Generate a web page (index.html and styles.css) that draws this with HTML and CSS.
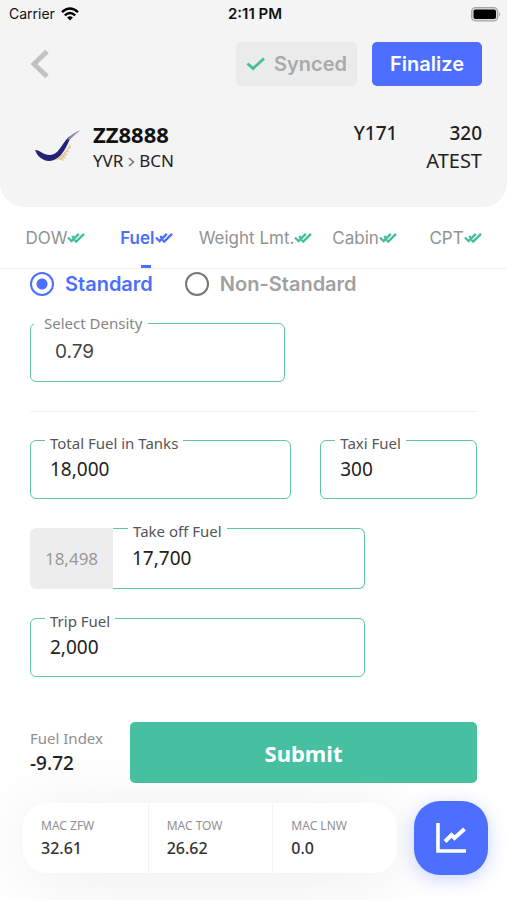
FILE: index.html
```html
<!DOCTYPE html>
<html lang="en">
<head>
<meta charset="utf-8">
<meta name="viewport" content="width=device-width, initial-scale=1">
<title>ZZ8888 Fuel</title>
<link rel="stylesheet" href="styles.css">
</head>
<body>
<svg class="defs" aria-hidden="true">
  <symbol id="checks" viewBox="0 0 18 12">
    <path d="M1 5.500 L4.600 9 L11.800 1.800 M5.200 4.200 L6.600 5.600 M7.600 8 L9.200 9.600 L17 1.800" fill="none" stroke="currentColor" stroke-width="2.400"/>
  </symbol>
</svg>
<header class="header">
  <div class="status">
    <span class="carrier">Carrier
      <svg width="18" height="14" viewBox="0 0 18 14" fill="none" stroke="#000" stroke-width="2.400"><path d="M1 5.200 Q9 -2.200 17 5.200"/><path d="M3.800 8.300 Q9 3.500 14.200 8.300"/><path d="M9 13.500 L6.100 10.400 Q9 8 11.900 10.400 Z" fill="#000" stroke="none"/></svg>
    </span>
    <time class="time">2:11 PM</time>
    <svg class="battery" width="30" height="15" viewBox="0 0 30 15"><rect x="0.700" y="0.700" width="26" height="13.200" rx="4" fill="#ddd" stroke="#a5a5a5" stroke-width="1.300"/><rect x="2.500" y="2.500" width="22.500" height="9.600" rx="2" fill="#000"/><path d="M28 5 Q30 7.300 28 9.600Z" fill="#a5a5a5"/></svg>
  </div>
  <div class="actions">
    <button class="back" type="button" aria-label="Back"><svg width="20" height="30" viewBox="0 0 20 30"><path d="M17 2.500 L4 15 L17 27.500" fill="none" stroke="#c2c2c2" stroke-width="5"/></svg></button>
    <button class="btn synced" type="button"><svg width="20" height="14" viewBox="0 0 20 14"><path d="M1.500 6.500 L7 11.500 L18 1.500" fill="none" stroke="#43bf9c" stroke-width="2.800"/></svg>Synced</button>
    <button class="btn finalize" type="button">Finalize</button>
  </div>
  <div class="flight">
    <svg class="logo" width="48" height="34" viewBox="0 0 48 34">
      <path d="M36 14 C32 21 28 26 20 30 L24 29.500 L31 31 L28 28 L33 28.500 L30 26 L34 25 L31.500 23 L35.500 21.500 L33 20 L37 18Z" fill="#e3cb9c"/>
      <path d="M1 20 C6 20 9 25 16 25 C26 25 29 9 38 5 C34 12 30 26 20 30 C11 33 4 28 1 20Z" fill="#23217a"/>
      <path d="M33 9.500 Q38 3 47 0 Q41 4 36 9.500Z" fill="#8c8ba8"/>
    </svg>
    <div class="ident">
      <h1 class="number">ZZ8888</h1>
      <p class="route">YVR <svg width="7" height="10" viewBox="0 0 7 10"><path d="M1 1 L5.500 5 L1 9" fill="none" stroke="#777" stroke-width="1.600"/></svg> BCN</p>
    </div>
    <div class="aircraft">
      <p class="config"><span>Y171</span><span>320</span></p>
      <p class="reg">ATEST</p>
    </div>
  </div>
</header>

<nav class="tabs">
  <a class="tab" href="#dow">DOW<svg><use href="#checks"/></svg></a>
  <a class="tab active" href="#fuel">Fuel<svg><use href="#checks"/></svg></a>
  <a class="tab" href="#weight">Weight Lmt.<svg><use href="#checks"/></svg></a>
  <a class="tab" href="#cabin">Cabin<svg><use href="#checks"/></svg></a>
  <a class="tab" href="#cpt">CPT<svg><use href="#checks"/></svg></a>
</nav>

<form class="form">
  <div class="radios">
    <label class="radio"><input type="radio" name="mode" checked><span>Standard</span></label>
    <label class="radio"><input type="radio" name="mode"><span>Non-Standard</span></label>
  </div>
  <div class="field density">
    <label for="density">Select Density</label>
    <select id="density"><option>0.79</option></select>
  </div>
  <hr class="rule">
  <div class="pair">
    <div class="field"><label for="total">Total Fuel in Tanks</label><input id="total" type="text" value="18,000"></div>
    <div class="field"><label for="taxi">Taxi Fuel</label><input id="taxi" type="text" value="300"></div>
  </div>
  <div class="takeoff">
    <output class="computed">18,498</output>
    <div class="field joined"><label for="takeoff">Take off Fuel</label><input id="takeoff" type="text" value="17,700"></div>
  </div>
  <div class="field trip"><label for="trip">Trip Fuel</label><input id="trip" type="text" value="2,000"></div>
  <div class="submit-row">
    <div class="index"><span class="index-name">Fuel Index</span><span class="index-value">-9.72</span></div>
    <button class="submit" type="submit">Submit</button>
  </div>
</form>

<footer class="footer">
  <dl class="mac">
    <div><dt>MAC ZFW</dt><dd>32.61</dd></div>
    <div><dt>MAC TOW</dt><dd>26.62</dd></div>
    <div><dt>MAC LNW</dt><dd>0.0</dd></div>
  </dl>
  <button class="chart" type="button" aria-label="Chart"><svg width="32" height="32" viewBox="0 0 32 32" fill="none" stroke="#fff"><path d="M3 1 V29 H31" stroke-width="3.600"/><path d="M10 19.500 L16.500 13 L19.500 16 L29.500 7" stroke-width="4"/></svg></button>
</footer>
</body>
</html>
```
FILE: styles.css
```css
* { box-sizing: border-box; }

body {
  margin: 0;
  min-height: 100vh;
  background: #fff;
  color: #222;
  font-family: "Noto Sans", sans-serif;
  display: flex;
  flex-direction: column;
}

h1, p, dl, dd { margin: 0; }

button, input, select { font: inherit; }

button { border: 0; padding: 0; cursor: pointer; }

.defs { position: absolute; width: 0; height: 0; }

/* Header */
.header {
  background: #f4f4f4;
  border-radius: 0 0 24px 24px;
  padding-bottom: 33px;
}

.status {
  display: grid;
  grid-template-columns: 1fr auto 1fr;
  align-items: center;
  height: 28px;
  padding: 0 6px 0 9px;
  color: #111;
  font: 14px/20px Inter, sans-serif;
}

.carrier { display: flex; align-items: center; gap: 6px; }
.time { font-size: 15px; font-weight: 600; }
.battery { justify-self: end; }

.actions {
  display: flex;
  align-items: center;
  gap: 15px;
  padding: 14px 25px 0 30px;
}

.back { display: flex; margin-right: auto; background: none; }

.btn {
  display: flex;
  align-items: center;
  justify-content: center;
  height: 44px;
  border-radius: 5px;
  font: 600 20px/24px Inter, sans-serif;
}

.synced { gap: 8px; padding: 0 10px; background: #ebebeb; color: #aaa; }
.finalize { width: 110px; background: #4c6fff; color: #fff; }

.flight {
  display: flex;
  align-items: center;
  gap: 11px;
  padding: 34px 25px 0 34px;
}

.ident { flex: 1; }
.number { color: #111; font-size: 22px; line-height: 28px; font-weight: 700; }
.route { font-size: 17px; line-height: 26px; }
.aircraft { color: #222; text-align: right; font-size: 19px; line-height: 27px; }
.config { display: flex; gap: 52px; justify-content: flex-end; font-weight: 500; }
.reg { font-size: 20px; }

/* Tabs */
.tabs {
  display: grid;
  grid-template-columns: 5fr 5fr 7fr 5fr 5fr;
  height: 62px;
  padding: 0 6px 0 10px;
  border-bottom: 1px solid #efefef;
}

.tab {
  position: relative;
  display: flex;
  align-items: center;
  justify-content: center;
  color: #929292;
  font: 17px/24px Inter, sans-serif;
  text-decoration: none;
  white-space: nowrap;
}

.tab svg { width: 18px; height: 12px; color: #43bf9c; }
.tab.active, .tab.active svg { color: #4c6fff; }
.tab.active { font-weight: 600; }

.tab.active::after {
  content: "";
  position: absolute;
  bottom: 0;
  left: 50%;
  width: 10px;
  height: 3px;
  margin-left: -5px;
  background: #4c6fff;
}

/* Form */
.form { padding: 2px 30px 0; }

.radios { display: flex; gap: 32px; }

.radio {
  display: flex;
  align-items: center;
  gap: 11px;
  color: #a0a0a0;
  font: 600 20px/26px Inter, sans-serif;
}

.radio input {
  appearance: none;
  width: 24px;
  height: 24px;
  margin: 0;
  border: 2px solid #777;
  border-radius: 50%;
}

.radio input:checked {
  border-color: #4c6fff;
  background: radial-gradient(circle, #4c6fff 5px, transparent 6px);
}

.radio:has(input:checked) { color: #4c6fff; }

.field {
  position: relative;
  height: 59px;
  border: 1px solid #5fc6a7;
  border-radius: 6px;
}

.field label {
  position: absolute;
  top: -8px;
  left: 14px;
  padding: 0 5px;
  background: #fff;
  color: #555;
  font-size: 15px;
  line-height: 20px;
  white-space: nowrap;
}

.field input, .field select {
  display: block;
  appearance: none;
  width: 100%;
  height: 100%;
  padding: 0 19px 2px;
  border: 0;
  border-radius: 6px;
  outline: 0;
  background: none;
  color: #222;
  font-size: 19px;
}

.density { width: 57%; margin-top: 26px; }
.density label { top: -11px; left: 3px; padding: 0 6px 0 10px; color: #858585; }
.density select { padding-left: 24px; color: #444; font-family: Inter, sans-serif; }

.rule { height: 1px; margin: 29px 0 28px; border: 0; background: #f2f2f2; }

.pair { display: grid; grid-template-columns: 5fr 3fr; gap: 29px; }

.takeoff { display: flex; width: 75%; margin: 29px 0; }

.computed {
  display: flex;
  align-items: center;
  justify-content: center;
  width: 83px;
  border-radius: 6px 0 0 6px;
  background: #ededed;
  color: #999;
  font-size: 17px;
}

.joined { flex: 1; height: 61px; border-left: 0; border-radius: 0 6px 6px 0; }
.joined label { left: 15px; }

.trip { width: 75%; }

.submit-row { display: flex; margin-top: 45px; }

.index { display: flex; flex-direction: column; justify-content: center; width: 100px; padding-bottom: 4px; }
.index-name { color: #909090; font-size: 15px; line-height: 24px; }
.index-value { font-size: 19px; line-height: 26px; font-weight: 500; }

.submit {
  flex: 1;
  height: 61px;
  border-radius: 5px;
  background: #47bfa1;
  color: #fff;
  font-size: 22px;
  font-weight: 700;
}

/* Footer */
.footer {
  display: flex;
  align-items: center;
  gap: 17px;
  padding: 18px 19px 24px 23px;
}

.mac {
  flex: 1;
  display: grid;
  grid-template-columns: repeat(3, 1fr);
  height: 70px;
  border-radius: 24px;
  background: #fff;
  box-shadow: 0 6px 70px rgba(0, 0, 0, 0.08);
}

.mac div {
  display: flex;
  flex-direction: column;
  justify-content: center;
  padding-left: 18px;
}

.mac div + div { border-left: 1px solid #f3f3f3; }
.mac dt { color: #909090; font-size: 12px; line-height: 20px; }
.mac dd { color: #333; font-size: 16px; line-height: 24px; font-weight: 500; }

.chart {
  display: flex;
  align-items: center;
  justify-content: center;
  width: 74px;
  height: 74px;
  border-radius: 26px;
  background: #4c6fff;
  box-shadow: 0 4px 18px rgba(76, 111, 255, 0.3);
}

.submit, .index { position: relative; }
```
